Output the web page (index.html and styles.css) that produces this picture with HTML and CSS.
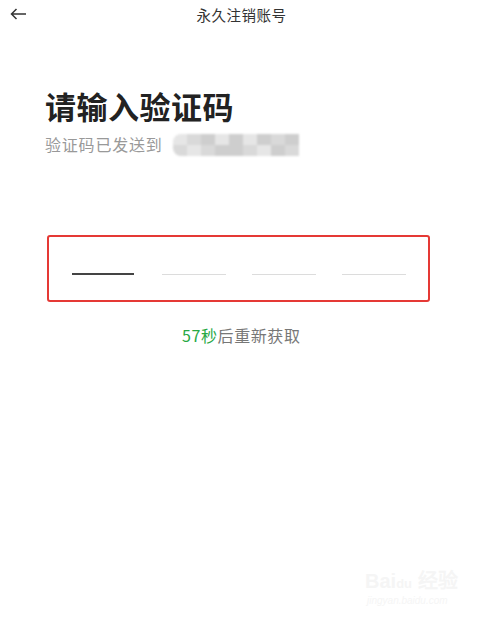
FILE: index.html
```html
<!DOCTYPE html>
<html lang="zh-CN">
<head>
    <meta charset="UTF-8">
    <meta name="viewport" content="width=device-width, initial-scale=1.0">
    <title>永久注销账号</title>
    <link rel="stylesheet" href="styles.css">
</head>
<body>
    <header class="topbar">
        <a href="#" class="back">
            <svg width="17" height="12" viewBox="0 0 17 12" fill="none" stroke="#333" stroke-width="1.5">
                <path d="M16 6H1.5M6.5 1L1.5 6l5 5"/>
            </svg>
        </a>
        <div class="title">永久注销账号</div>
    </header>

    <main class="content">
        <h1>请输入验证码</h1>
        <div class="sent">
            <span>验证码已发送到</span>
            <div class="mosaic">
                <i class="s2"></i><i class="s1"></i><i class="s3"></i><i class="s2"></i><i class="s3"></i><i class="s2"></i><i class="s3"></i><i class="s1"></i><i class="s3"></i>
                <i class="s1"></i><i class="s2"></i><i class="s1"></i><i class="s3"></i><i class="s3"></i><i class="s1"></i><i class="s2"></i><i class="s3"></i><i class="s1"></i>
            </div>
        </div>

        <div class="code-box">
            <span class="slot active"></span>
            <span class="slot"></span>
            <span class="slot"></span>
            <span class="slot"></span>
        </div>

        <p class="resend"><span class="count">57秒</span>后重新获取</p>
    </main>

    <div class="watermark">
        <div class="wm-logo">Bai<span>du</span> 经验</div>
        <div class="wm-url">jingyan.baidu.com</div>
    </div>
</body>
</html>
```

FILE: styles.css
```css
* {
    margin: 0;
    padding: 0;
    box-sizing: border-box;
}

body {
    width: 483px;
    height: 619px;
    background: #fff;
    color: #333;
    font-family: "Noto Sans CJK SC", "Noto Sans", sans-serif;
    position: relative;
    overflow: hidden;
}

.topbar {
    height: 28px;
    display: flex;
    align-items: center;
    justify-content: center;
    position: relative;
}

.back {
    position: absolute;
    left: 10px;
    top: 8px;
    display: block;
    line-height: 0;
}

.title {
    font-size: 14.5px;
    color: #333;
    letter-spacing: 0.5px;
}

.content {
    padding: 58px 0 0 45px;
}

h1 {
    font-size: 31px;
    font-weight: 700;
    color: #222;
    line-height: 40px;
    letter-spacing: 0.5px;
}

.sent {
    display: flex;
    align-items: center;
    margin-top: 5px;
    height: 26px;
    font-size: 16px;
    color: #999;
    letter-spacing: 0.8px;
}

.mosaic {
    display: grid;
    grid-template-columns: repeat(9, 14px);
    grid-template-rows: repeat(2, 11px);
    margin-left: 10px;
    margin-top: 1px;
    border-radius: 8px 0 0 8px;
    overflow: hidden;
    filter: blur(1.2px);
}

.mosaic i { display: block; }
.mosaic .s1 { background: #d9d9d9; }
.mosaic .s2 { background: #e6e6e6; }
.mosaic .s3 { background: #cecece; }

.code-box {
    width: 383px;
    height: 67px;
    margin: 78px 0 0 2px;
    border: 2px solid #e53935;
    border-radius: 3px;
    display: flex;
    align-items: center;
    gap: 26px;
    padding: 11px 0 0 23px;
}

.slot {
    width: 64px;
    height: 1px;
    background: #dcdcdc;
}

.slot.active {
    width: 62px;
    height: 2.5px;
    background: #444;
    margin-right: 2px;
}

.resend {
    margin: 21px 0 0 137px;
    font-size: 16px;
    color: #777;
    letter-spacing: 0.6px;
}

.count {
    color: #27a844;
}

.watermark {
    position: absolute;
    left: 365px;
    top: 570px;
    color: #f5f5f5;
    font-family: "Liberation Sans", sans-serif;
}

.wm-logo {
    font-size: 20px;
    font-weight: 700;
    line-height: 22px;
}

.wm-logo span {
    font-size: 13px;
}

.wm-url {
    font-size: 10px;
    font-style: italic;
    margin-left: 2px;
}
```
